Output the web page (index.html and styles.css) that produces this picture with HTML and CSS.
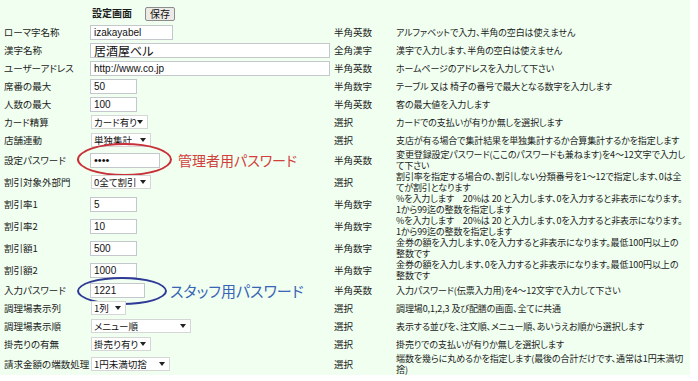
FILE: index.html
```html
<!DOCTYPE html>
<html lang="ja">
<head>
    <meta charset="UTF-8">
    <title>設定画面</title>
    <link rel="stylesheet" href="styles.css">
</head>
<body>
    <div class="page">
        <table class="settings">
            <colgroup>
                <col class="c-label"><col class="c-input"><col class="c-type"><col class="c-desc">
            </colgroup>
            <tr class="head">
                <td></td>
                <td><span class="title">設定画面</span><button class="save">保存</button></td>
                <td></td>
                <td></td>
            </tr>
            <tr>
                <td>ローマ字名称</td>
                <td><input class="w-83" value="izakayabel"></td>
                <td>半角英数</td>
                <td>アルファベットで入力、半角の空白は使えません</td>
            </tr>
            <tr>
                <td>漢字名称</td>
                <td><input class="w-240 big" value="居酒屋ベル"></td>
                <td>全角漢字</td>
                <td>漢字で入力します、半角の空白は使えません</td>
            </tr>
            <tr>
                <td>ユーザーアドレス</td>
                <td><input class="w-240" value="http://www.co.jp"></td>
                <td>半角英数</td>
                <td>ホームページのアドレスを入力して下さい</td>
            </tr>
            <tr>
                <td>席番の最大</td>
                <td><input class="w-47" value="50"></td>
                <td>半角数字</td>
                <td>テーブル 又は 椅子の番号で最大となる数字を入力します</td>
            </tr>
            <tr>
                <td>人数の最大</td>
                <td><input class="w-47" value="100"></td>
                <td>半角英数</td>
                <td>客の最大値を入力します</td>
            </tr>
            <tr>
                <td>カード精算</td>
                <td><span class="sel"><select class="w-57"><option>カード有り</option></select></span></td>
                <td>選択</td>
                <td>カードでの支払いが有りか無しを選択します</td>
            </tr>
            <tr>
                <td>店舗連動</td>
                <td><span class="sel"><select class="w-60"><option>単独集計</option></select></span></td>
                <td>選択</td>
                <td>支店が有る場合で集計結果を単独集計するか合算集計するかを指定します</td>
            </tr>
            <tr>
                <td>設定パスワード</td>
                <td><span class="mark red"><input type="password" class="w-70" value="1234"></span><span class="note red-text">管理者用パスワード</span></td>
                <td>半角英数</td>
                <td>変更登録設定パスワード(ここのパスワードも兼ねます)を4～12文字で入力し<br>て下さい</td>
            </tr>
            <tr>
                <td>割引対象外部門</td>
                <td><span class="sel"><select class="w-60"><option>0全て割引</option></select></span></td>
                <td>選択</td>
                <td>割引率を指定する場合の、割引しない分類番号を1～12で指定します、0は全<br>てが割引となります</td>
            </tr>
            <tr>
                <td>割引率1</td>
                <td><input class="w-47" value="5"></td>
                <td>半角数字</td>
                <td>%を入力します　20%は 20 と入力します、0を入力すると非表示になります。<br>1から99迄の整数を指定します</td>
            </tr>
            <tr>
                <td>割引率2</td>
                <td><input class="w-47" value="10"></td>
                <td>半角数字</td>
                <td>%を入力します　20%は 20 と入力します、0を入力すると非表示になります。<br>1から99迄の整数を指定します</td>
            </tr>
            <tr>
                <td>割引額1</td>
                <td><input class="w-47" value="500"></td>
                <td>半角数字</td>
                <td>金券の額を入力します、0を入力すると非表示になります。最低100円以上の<br>整数です</td>
            </tr>
            <tr>
                <td>割引額2</td>
                <td><input class="w-47" value="1000"></td>
                <td>半角数字</td>
                <td>金券の額を入力します、0を入力すると非表示になります。最低100円以上の<br>整数です</td>
            </tr>
            <tr>
                <td>入力パスワード</td>
                <td><span class="mark blue"><input class="w-55" value="1221"></span><span class="note blue-text">スタッフ用パスワード</span></td>
                <td>半角英数</td>
                <td>入力パスワード(伝票入力用)を4～12文字で入力して下さい</td>
            </tr>
            <tr>
                <td>調理場表示列</td>
                <td><span class="sel"><select class="w-35"><option>1列</option></select></span></td>
                <td>選択</td>
                <td>調理場0,1,2,3 及び配膳の画面、全てに共通</td>
            </tr>
            <tr>
                <td>調理場表示順</td>
                <td><span class="sel"><select class="w-100"><option>メニュー順</option></select></span></td>
                <td>選択</td>
                <td>表示する並びを、注文順、メニュー順、あいうえお順から選択します</td>
            </tr>
            <tr>
                <td>掛売りの有無</td>
                <td><span class="sel"><select class="w-60"><option>掛売り有り</option></select></span></td>
                <td>選択</td>
                <td>掛売りでの支払いが有りか無しを選択します</td>
            </tr>
            <tr>
                <td>請求金額の端数処理</td>
                <td><span class="sel"><select class="w-79"><option>1円未満切捨</option></select></span></td>
                <td>選択</td>
                <td>端数を幾らに丸めるかを指定します(最後の合計だけです、通常は1円未満切<br>捨)</td>
            </tr>
        </table>
    </div>
</body>
</html>
```

FILE: styles.css
```css
body {
    margin: 0;
    background: #fff;
    font-family: "Noto Sans CJK JP", "Noto Sans", sans-serif;
    color: #1c1c1c;
}
.page {
    width: 690px;
    background: #f0fff0;
    padding: 5px 0 0 2px;
    box-sizing: border-box;
}
.settings {
    width: 688px;
    table-layout: fixed;
    border-collapse: collapse;
    font-size: 9.5px;
    line-height: 11px;
    font-feature-settings: "palt";
}
.c-label { width: 88px; }
.c-input { width: 242px; }
.c-type { width: 64px; }
.c-desc { width: 294px; }
.settings td {
    height: 18px;
    padding: 0;
    vertical-align: middle;
    white-space: nowrap;
}
.settings td:first-child,
.settings td:nth-child(3) {
    padding-left: 2px;
}
.settings td:last-child {
    font-size: 9px;
    letter-spacing: -0.1px;
}
.title {
    font-weight: 700;
    font-size: 10px;
    margin-left: 2px;
}
.save {
    margin-left: 13px;
    height: 14px;
    padding: 0 4px;
    font: 10px/12px "Noto Sans CJK JP", sans-serif;
    color: #111;
    background: #eceae6;
    border: 1px solid #8c8c8c;
    border-radius: 2px;
    vertical-align: middle;
}
.settings input {
    height: 15px;
    box-sizing: border-box;
    border: 1px solid #c4c8cc;
    background: #fff;
    padding: 0 3px;
    font: 10px "Liberation Sans", "Noto Sans CJK JP", sans-serif;
    color: #111;
    vertical-align: middle;
    margin: 0;
}
.settings input.big {
    font: 12px "Noto Sans CJK JP", sans-serif;
    font-feature-settings: "palt";
}
.settings input[type=password] {
    font-size: 11px;
    letter-spacing: 0;
}
.w-35 { width: 35px; }
.w-47 { width: 47px; }
.w-55 { width: 55px; }
.w-57 { width: 57px; }
.w-60 { width: 60px; }
.w-70 { width: 70px; }
.w-79 { width: 79px; }
.w-83 { width: 83px; }
.w-100 { width: 100px; }
.w-240 { width: 240px; }
.sel {
    position: relative;
    display: inline-block;
    vertical-align: middle;
    margin-left: 1px;
}
.sel select {
    appearance: none;
    -webkit-appearance: none;
    display: block;
    height: 14px;
    box-sizing: border-box;
    border: 1px solid #d6d6d6;
    border-radius: 0;
    background: #fff;
    padding: 0 10px 0 2px;
    font: 9.5px/12px "Noto Sans CJK JP", sans-serif;
    font-feature-settings: "palt";
    color: #111;
    margin: 0;
}
.sel::after {
    content: "";
    position: absolute;
    right: 5px;
    top: 5px;
    border-left: 3px solid transparent;
    border-right: 3px solid transparent;
    border-top: 4px solid #222;
}
.mark {
    position: relative;
    display: inline-block;
    vertical-align: middle;
}
.mark::before {
    content: "";
    position: absolute;
    border-radius: 50%;
    pointer-events: none;
}
.mark.red::before {
    left: -13px;
    top: -10px;
    width: 91px;
    height: 29px;
    border: 2px solid #c8303a;
}
.mark.blue::before {
    left: -13px;
    top: -6px;
    width: 86px;
    height: 24px;
    border: 2px solid #2f3a96;
}
.note {
    vertical-align: middle;
    font-size: 14px;
    line-height: 11px;
}
.red-text {
    margin-left: 18px;
    color: #d2403c;
}
.blue-text {
    margin-left: 25px;
    font-size: 15px;
    color: #3a64b6;
}
```
